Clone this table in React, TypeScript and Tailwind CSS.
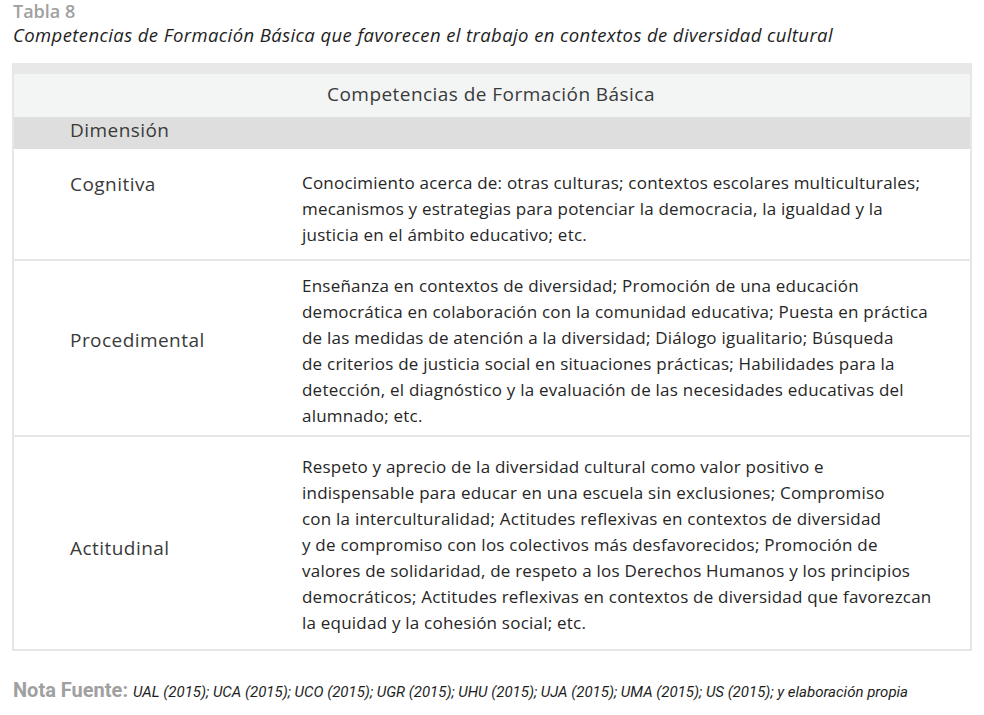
import React from "react";

const font = { fontFamily: "'Open Sans', 'Noto Sans', sans-serif" };

function Lines({ lines }: { lines: string[] }) {
  return (
    <>
      {lines.map((l, i) => (
        <div key={i} className="whitespace-nowrap">{l}</div>
      ))}
    </>
  );
}

const body = "text-[17px] leading-[26px] tracking-[0.22px] text-[#262626]";
const label = "text-[19px] tracking-[0.45px] text-[#3a3a3a]";

export default function App() {
  return (
    <div className="w-[984px] h-[715px] bg-white relative overflow-hidden" style={font}>
      <div className="pl-[13px] pt-0">
        <div className="text-[18px] leading-[22px] text-[#a0a0a0] font-semibold">Tabla 8</div>
        <div className="text-[18.5px] leading-[26px] tracking-[0.4px] italic text-[#1e1e1e]">
          Competencias de Formación Básica que favorecen el trabajo en contextos de diversidad cultural
        </div>
      </div>
      <div className="ml-[12px] mt-[15px] w-[960px] border-l-2 border-r-2 border-b-2 border-[#e6e6e6]">
        <div className="h-[11px] bg-[#e8e8e8]" />
        <div className={`h-[43px] bg-[#f3f4f4] flex items-center justify-center pr-[2px] pb-[3px] ${label}`}>
          Competencias de Formación Básica
        </div>
        <div className={`h-[32px] bg-[#dedede] flex items-center pl-[56px] pb-[5px] ${label}`}>
          Dimensión
        </div>
        <div className={`flex h-[112px] border-b-2 border-[#e6e6e6] ${body}`}>
          <div className={`w-[288px] pl-[56px] pt-[22px] ${label}`}>Cognitiva</div>
          <div className="pt-[21px]">
            <Lines
              lines={[
                "Conocimiento acerca de: otras culturas; contextos escolares multiculturales;",
                "mecanismos y estrategias para potenciar la democracia, la igualdad y la",
                "justicia en el ámbito educativo; etc.",
              ]}
            />
          </div>
        </div>
        <div className={`flex h-[176px] border-b-2 border-[#e6e6e6] ${body}`}>
          <div className={`w-[288px] pl-[56px] flex items-center pb-[16px] ${label}`}>Procedimental</div>
          <div className="pt-[12px]">
            <Lines
              lines={[
                "Enseñanza en contextos de diversidad; Promoción de una educación",
                "democrática en colaboración con la comunidad educativa; Puesta en práctica",
                "de las medidas de atención a la diversidad; Diálogo igualitario; Búsqueda",
                "de criterios de justicia social en situaciones prácticas; Habilidades para la",
                "detección, el diagnóstico y la evaluación de las necesidades educativas del",
                "alumnado; etc.",
              ]}
            />
          </div>
        </div>
        <div className={`flex h-[212px] ${body}`}>
          <div className={`w-[288px] pl-[56px] flex items-center pt-[10px] ${label}`}>Actitudinal</div>
          <div className="pt-[17px]">
            <Lines
              lines={[
                "Respeto y aprecio de la diversidad cultural como valor positivo e",
                "indispensable para educar en una escuela sin exclusiones; Compromiso",
                "con la interculturalidad; Actitudes reflexivas en contextos de diversidad",
                "y de compromiso con los colectivos más desfavorecidos; Promoción de",
                "valores de solidaridad, de respeto a los Derechos Humanos y los principios",
                "democráticos; Actitudes reflexivas en contextos de diversidad que favorezcan",
                "la equidad y la cohesión social; etc.",
              ]}
            />
          </div>
        </div>
      </div>
      <div className="pl-[13px] mt-[24px] flex items-baseline whitespace-nowrap">
        <span className="text-[20px] font-bold text-[#a0a0a0]" style={{ fontFamily: "Roboto, sans-serif" }}>
          Nota Fuente:
        </span>
        <span className="ml-[5px] text-[15px] italic text-[#1e1e1e]" style={{ fontFamily: "Roboto, sans-serif" }}>
          UAL (2015); UCA (2015); UCO (2015); UGR (2015); UHU (2015); UJA (2015); UMA (2015); US (2015); y elaboración propia
        </span>
      </div>
    </div>
  );
}
